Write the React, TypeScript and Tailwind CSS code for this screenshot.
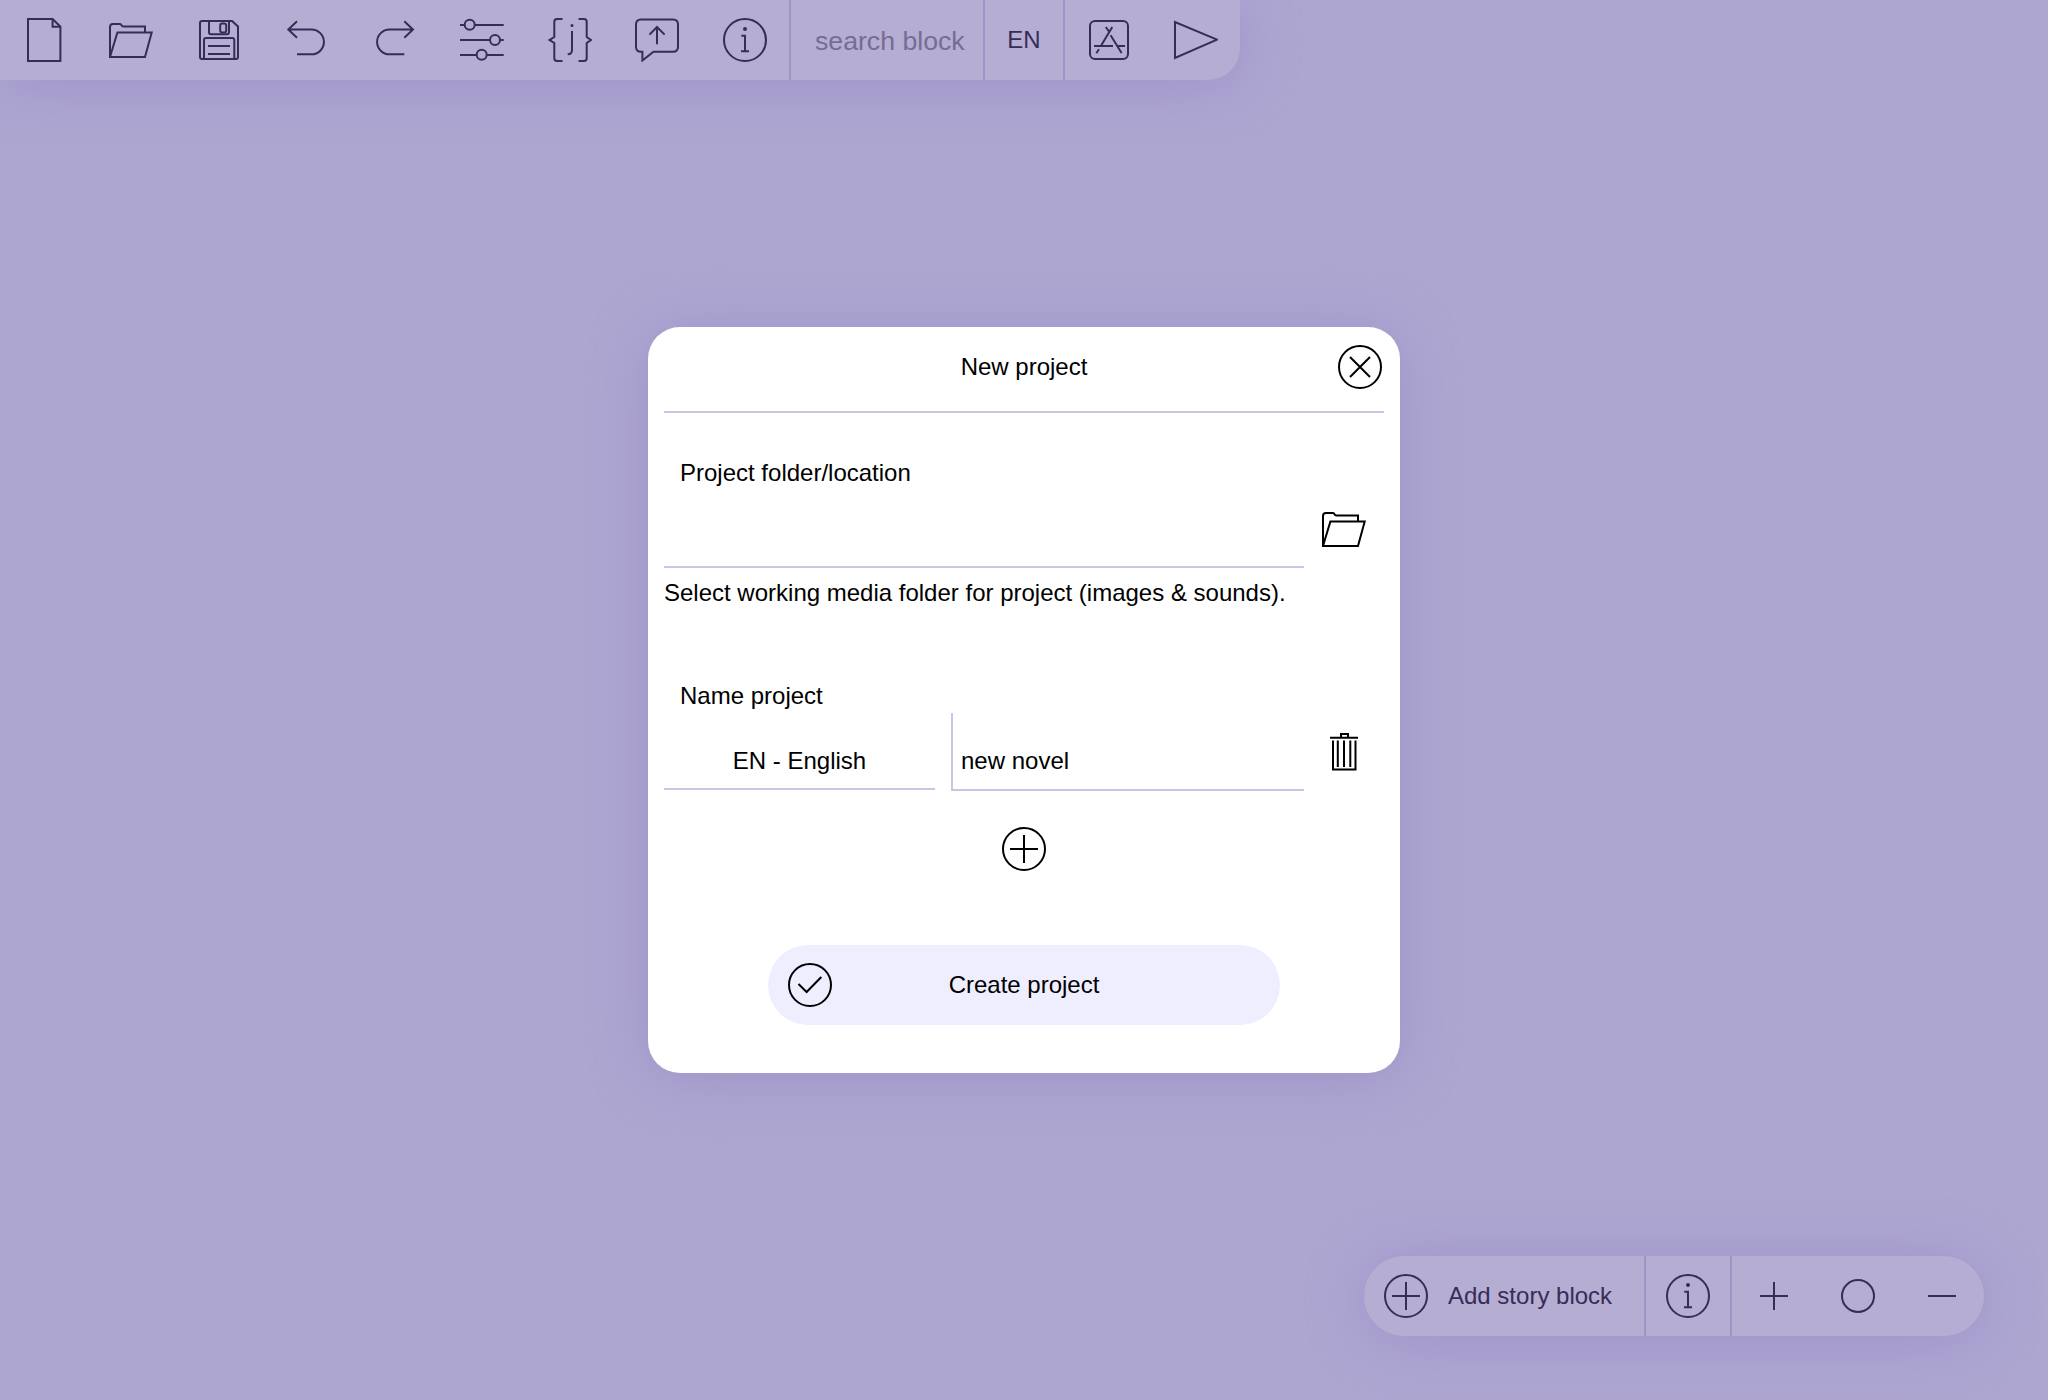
import type { ReactNode } from "react";

function Icon({ children }: { children: ReactNode }) {
  return (
    <svg
      viewBox="0 0 44 44"
      className="block size-11 shrink-0"
      fill="none"
      stroke="currentColor"
      strokeWidth={2}
    >
      {children}
    </svg>
  );
}

const FileIcon = () => (
  <Icon>
    <path d="M6 1H30.600L38.400 8.700V43H6Z" />
    <path d="M30.600 1V8.700H38.400" />
  </Icon>
);

const FolderIcon = () => (
  <Icon>
    <path d="M1 39V9Q1 6 4 6H11Q12 6 12.6 7.4Q13 8.5 14.4 8.5H36V14.5" />
    <path d="M8.4 14.5H42.700L36 39H1Z" />
  </Icon>
);

const SaveIcon = () => (
  <Icon>
    <path d="M5 3H35L41 8.5V39Q41 41 39 41H5Q3 41 3 39V5Q3 3 5 3Z" />
    <path d="M12 3V14.3Q12 16.3 14 16.3H30Q32 16.3 32 14.3V3" />
    <rect x="23.2" y="5.6" width="6" height="8.8" rx="2" />
    <path d="M7 41V22Q7 20 9 20H35.300Q37.300 20 37.300 22V41M11 28H33M11 36H33" />
  </Icon>
);

const UndoIcon = () => (
  <Icon>
    <path d="M3.300 11.500H26.500A12.400 12.400 0 0 1 26.500 36.300H12M12 3.300L3.300 11.500L12 19.800" />
  </Icon>
);

const RedoIcon = () => (
  <Icon>
    <path d="M41 11.500H17.500A12.400 12.400 0 0 0 17.500 36.300H32.300M32.300 3.300L41 11.500L32.300 19.800" />
  </Icon>
);

const SlidersIcon = () => (
  <Icon>
    <circle cx="9.700" cy="6.800" r="5" />
    <circle cx="35" cy="22" r="5" />
    <circle cx="21.700" cy="36.800" r="5" />
    <path d="M0 7H4.700M14.700 7H43.700M0 22H30M40 22H43.700M0 37H16.700M26.700 37H43.700" />
  </Icon>
);

const JsonIcon = () => (
  <Icon>
    <path d="M14.500 1H9Q6.300 1 6.300 4V19L1.500 22L6.300 25V40Q6.300 43 9 43H14.500" />
    <path d="M30.500 1H36Q38.700 1 38.700 4V19L43 22L38.700 25V40Q38.700 43 36 43H30.500" />
    <path d="M24 13V32Q24 36.300 19.700 36.300" />
    <circle cx="24" cy="7.500" r="1.500" fill="currentColor" stroke="none" />
  </Icon>
);

const FeedbackIcon = () => (
  <Icon>
    <path d="M6 1.500H38Q43 1.500 43 6.500V28.700Q43 33.700 38 33.700H18.500L7.400 42.500V33.700H6Q1 33.700 1 28.700V6.500Q1 1.500 6 1.500Z" />
    <path d="M22 26.300V9M14.500 16.600L22 9L29.600 16.600" />
  </Icon>
);

const InfoIcon = () => (
  <Icon>
    <circle cx="22" cy="22" r="21" />
    <circle cx="22" cy="11" r="2" fill="currentColor" stroke="none" />
    <path d="M18.300 17.800H22V33.200M18 33.200H26" />
  </Icon>
);

const AppsIcon = () => (
  <Icon>
    <rect x="3" y="3" width="38" height="38" rx="5" />
    <path d="M25.300 9L14 27.700M18.800 9L22 13.500M23.600 17.300L34.600 35M12 31.300L9.300 35.200M7 28H26M30 28H38" />
  </Icon>
);

const PlayIcon = () => (
  <Icon>
    <path d="M1 4V40L43 21.700Z" />
  </Icon>
);

const PlusCircleIcon = () => (
  <Icon>
    <circle cx="22" cy="22" r="21" />
    <path d="M22 8V36M8 22H36" />
  </Icon>
);

const PlusIcon = () => (
  <Icon>
    <path d="M22 8V36M8 22H36" />
  </Icon>
);

const RingIcon = () => (
  <Icon>
    <circle cx="22" cy="22" r="16" />
  </Icon>
);

const MinusIcon = () => (
  <Icon>
    <path d="M8 22H36" />
  </Icon>
);

const CloseIcon = () => (
  <Icon>
    <circle cx="22" cy="22" r="21" />
    <path d="M12 12L32 32M32 12L12 32" />
  </Icon>
);

const CheckIcon = () => (
  <Icon>
    <circle cx="22" cy="22" r="21" />
    <path d="M10.500 21L18.600 29L33.300 14" />
  </Icon>
);

const TrashIcon = () => (
  <Icon>
    <path d="M8 7.700H36M19 7V4H26V7M11 10.500V39.500H33.500V10.500M15.800 10.500V37M22 10.500V37M28.300 10.500V37" />
  </Icon>
);

const tools = [
  FileIcon,
  FolderIcon,
  SaveIcon,
  UndoIcon,
  RedoIcon,
  SlidersIcon,
  JsonIcon,
  FeedbackIcon,
  InfoIcon,
];

function Toolbar() {
  return (
    <header className="flex h-20 w-[1240px] rounded-br-[32px] bg-[#b5add2] text-[#372c58] shadow-[0_4px_60px_#9f92ca]">
      <div className="grid w-[789px] grid-cols-9">
        {tools.map((Tool, i) => (
          <button key={i} className="flex items-center justify-center">
            <Tool />
          </button>
        ))}
      </div>
      <div className="flex w-[194px] items-center border-l-2 border-[#9f94c8] pt-0.5 pl-6 text-[26.67px] whitespace-nowrap text-[#766c95]">
        search block
      </div>
      <button className="w-20 border-l-2 border-[#9f94c8] text-center">EN</button>
      <div className="grid flex-1 grid-cols-2 border-l-2 border-[#9f94c8]">
        <button className="flex items-center justify-center">
          <AppsIcon />
        </button>
        <button className="flex items-center justify-center">
          <PlayIcon />
        </button>
      </div>
    </header>
  );
}

function NewProjectDialog() {
  return (
    <section className="h-[746px] w-[752px] rounded-[32px] bg-white px-4 text-black shadow-[0_4px_60px_#9f93c7]">
      <div className="grid h-[86px] grid-cols-[48px_1fr_48px] items-center border-b-2 border-[#cbc5e3] pb-1">
        <h1 className="col-start-2 text-center">New project</h1>
        <button className="ml-0.5">
          <CloseIcon />
        </button>
      </div>

      <div className="mt-[46px] pl-4 leading-7">Project folder/location</div>
      <div className="flex h-[81px]">
        <div className="w-[640px] border-b-2 border-[#cbc5e3]" />
        <button className="ml-[18px] mt-5 self-start">
          <FolderIcon />
        </button>
      </div>
      <p className="mt-[11px] leading-7 whitespace-nowrap">
        Select working media folder for project (images &amp; sounds).
      </p>

      <div className="mt-[75px] pl-4 leading-7">Name project</div>
      <div className="mt-[3px] flex h-[78px] items-start">
        <div className="flex h-[77px] w-[271px] items-center justify-center border-b-2 border-[#cbc5e3] pt-5">
          EN - English
        </div>
        <div className="ml-4 flex h-[78px] w-[353px] items-center border-b-2 border-l-2 border-[#cbc5e3] pt-[19px] pl-2">
          new novel
        </div>
        <button className="mt-[17px] ml-[18px]">
          <TrashIcon />
        </button>
      </div>

      <button className="mx-auto mt-9 block">
        <PlusCircleIcon />
      </button>
      <button className="mx-auto mt-[74px] grid h-20 w-[512px] grid-cols-[44px_1fr_44px] items-center rounded-full bg-[#efeefe] px-5">
        <CheckIcon />
        <span>Create project</span>
      </button>
    </section>
  );
}

function BlockBar() {
  return (
    <footer className="flex h-20 w-[620px] rounded-full bg-[#b5add2] text-[#372c58] shadow-[0_4px_60px_#9f92ca]">
      <button className="flex w-[280px] items-center pl-5 whitespace-nowrap">
        <PlusCircleIcon />
        <span className="ml-5">Add story block</span>
      </button>
      <button className="flex w-[86px] items-center justify-center border-l-2 border-[#9f94c8]">
        <InfoIcon />
      </button>
      <div className="flex flex-1 items-center gap-10 border-l-2 border-[#9f94c8] pl-5">
        <button>
          <PlusIcon />
        </button>
        <button>
          <RingIcon />
        </button>
        <button>
          <MinusIcon />
        </button>
      </div>
    </footer>
  );
}

export default function App() {
  return (
    <div className="flex h-[1400px] w-[2048px] flex-col overflow-hidden bg-[#ada6d1] font-['Liberation_Sans',Arial,sans-serif] text-[24px] leading-7">
      <Toolbar />
      <main className="mt-[247px] flex justify-center">
        <NewProjectDialog />
      </main>
      <div className="mt-[183px] flex justify-end pr-16">
        <BlockBar />
      </div>
    </div>
  );
}
